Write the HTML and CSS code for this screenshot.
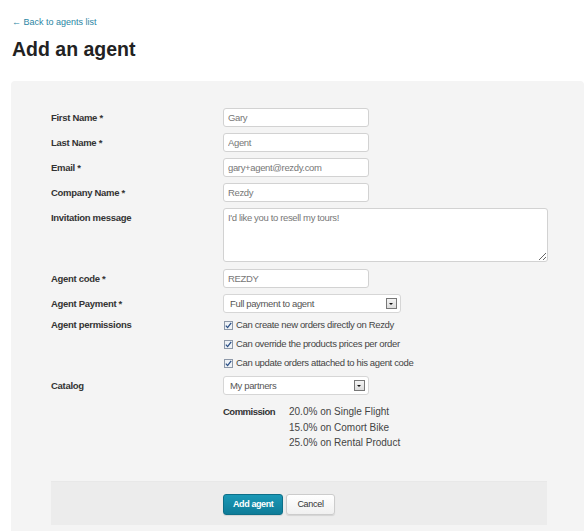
FILE: index.html
```html
<!DOCTYPE html>
<html lang="en">
<head>
    <meta charset="UTF-8">
    <meta name="viewport" content="width=device-width, initial-scale=1.0">
    <title>Add an agent</title>
    <link rel="stylesheet" href="styles.css">
</head>
<body>
    <div class="page">
        <a class="back-link" href="#">&larr; Back to agents list</a>
        <h1>Add an agent</h1>

        <div class="panel">
            <div class="form-row">
                <label>First Name *</label>
                <div class="field"><input class="text-input" type="text" value="Gary"></div>
            </div>
            <div class="form-row">
                <label>Last Name *</label>
                <div class="field"><input class="text-input" type="text" value="Agent"></div>
            </div>
            <div class="form-row">
                <label>Email *</label>
                <div class="field"><input class="text-input" type="text" value="gary+agent@rezdy.com"></div>
            </div>
            <div class="form-row">
                <label>Company Name *</label>
                <div class="field"><input class="text-input" type="text" value="Rezdy"></div>
            </div>
            <div class="form-row form-row-message">
                <label>Invitation message</label>
                <div class="field"><textarea class="text-area">I'd like you to resell my tours!</textarea></div>
            </div>
            <div class="form-row">
                <label>Agent code *</label>
                <div class="field"><input class="text-input" type="text" value="REZDY"></div>
            </div>
            <div class="form-row">
                <label>Agent Payment *</label>
                <div class="field">
                    <div class="select select-wide">
                        <span>Full payment to agent</span>
                        <span class="select-arrow"></span>
                    </div>
                </div>
            </div>
            <div class="form-row form-row-checks">
                <label>Agent permissions</label>
                <div class="field checks">
                    <div class="check">
                        <span class="check-box"><svg width="9" height="9" viewBox="0 0 9 9"><path d="M1.8 4.6 L3.6 6.6 L7.2 1.8" fill="none" stroke="#2b4f86" stroke-width="1.3"/></svg></span>
                        Can create new orders directly on Rezdy
                    </div>
                    <div class="check">
                        <span class="check-box"><svg width="9" height="9" viewBox="0 0 9 9"><path d="M1.8 4.6 L3.6 6.6 L7.2 1.8" fill="none" stroke="#2b4f86" stroke-width="1.3"/></svg></span>
                        Can override the products prices per order
                    </div>
                    <div class="check">
                        <span class="check-box"><svg width="9" height="9" viewBox="0 0 9 9"><path d="M1.8 4.6 L3.6 6.6 L7.2 1.8" fill="none" stroke="#2b4f86" stroke-width="1.3"/></svg></span>
                        Can update orders attached to his agent code
                    </div>
                </div>
            </div>
            <div class="form-row">
                <label>Catalog</label>
                <div class="field">
                    <div class="select">
                        <span>My partners</span>
                        <span class="select-arrow"></span>
                    </div>
                </div>
            </div>
            <div class="form-row">
                <span></span>
                <div class="commission">
                    <strong>Commission</strong>
                    <div class="commission-list">
                        <div>20.0% on Single Flight</div>
                        <div>15.0% on Comort Bike</div>
                        <div>25.0% on Rental Product</div>
                    </div>
                </div>
            </div>

            <div class="form-actions">
                <button class="btn btn-primary">Add agent</button>
                <button class="btn">Cancel</button>
            </div>
        </div>
    </div>
</body>
</html>
```

FILE: styles.css
```css
body {
    margin: 0;
    font-family: "Liberation Sans", Arial, sans-serif;
    color: #333;
    background: #fff;
}
.page {
    padding: 16px 2px 0 11px;
}
.back-link {
    display: block;
    margin-left: 1px;
    font-size: 9px;
    line-height: 13px;
    color: #2a86a4;
    text-decoration: none;
}
h1 {
    margin: 8px 0 0 1px;
    font-size: 19.5px;
    line-height: 24px;
    color: #222;
}
.panel {
    margin-top: 20px;
    background: #f4f4f4;
    border-radius: 4px 4px 0 0;
    padding: 27px 37px 10px 40px;
}
.form-row {
    display: grid;
    grid-template-columns: 172px 1fr;
    margin-bottom: 6px;
}
.form-row label {
    font-size: 9.5px;
    letter-spacing: -0.3px;
    font-weight: bold;
    line-height: 19px;
    color: #333;
}
.form-row-message {
    margin-bottom: 7px;
}
.text-input, .text-area {
    display: block;
    box-sizing: border-box;
    width: 146px;
    height: 19px;
    margin: 0;
    padding: 0 4px;
    border: 1px solid #d2d2d2;
    border-radius: 3px;
    background: #fff;
    font-family: inherit;
    font-size: 9.5px;
    letter-spacing: -0.35px;
    color: #777;
    outline: none;
}
.text-area {
    width: 325px;
    height: 54px;
    padding: 3px 4px;
    resize: vertical;
}
.select {
    box-sizing: border-box;
    display: flex;
    align-items: center;
    justify-content: space-between;
    width: 146px;
    height: 19px;
    padding: 0 3px 0 6px;
    border: 1px solid #d6d6d6;
    border-radius: 3px;
    background: #fff;
    font-size: 9.5px;
    letter-spacing: -0.35px;
    color: #555;
}
.select-wide {
    width: 178px;
}
.select-arrow {
    position: relative;
    box-sizing: border-box;
    width: 11px;
    height: 11px;
    border: 1px solid #777;
    background: linear-gradient(#f4f4f4, #dcdcdc);
}
.select-arrow::after {
    content: "";
    position: absolute;
    left: 2px;
    top: 4px;
    border-left: 2.5px solid transparent;
    border-right: 2.5px solid transparent;
    border-top: 2.5px solid #111;
}
.form-row-checks {
    margin-top: -1px;
    margin-bottom: 6px;
}
.form-row-checks label {
    line-height: 14px;
}
.checks {
    display: flex;
    flex-direction: column;
    gap: 5px;
}
.check {
    display: flex;
    align-items: center;
    gap: 3px;
    font-size: 9.5px;
    letter-spacing: -0.35px;
    line-height: 14px;
    color: #444;
}
.check-box {
    display: inline-flex;
    box-sizing: border-box;
    width: 9px;
    height: 9px;
    margin-left: 1px;
    border: 1px solid #8d98a8;
    background: #eef2f6;
}
.check-box svg {
    margin: -1px;
}
.commission {
    display: grid;
    grid-template-columns: 66px 1fr;
    margin-top: 3px;
    font-size: 10px;
    line-height: 15.5px;
    color: #444;
}
.commission strong {
    font-size: 9.5px;
    letter-spacing: -0.5px;
    color: #333;
}
.form-actions {
    margin-top: 30px;
    padding: 12px 0 10px 172px;
    background: #ececec;
    border-top: 1px solid #e8e8e8;
    display: flex;
    gap: 3px;
}
.btn {
    height: 21px;
    padding: 0 10px;
    border: 1px solid #ccc;
    border-radius: 3px;
    background: linear-gradient(#fff, #f0f0f0);
    box-shadow: 0 1px 1px rgba(0,0,0,0.1);
    font-family: inherit;
    font-size: 9px;
    letter-spacing: -0.3px;
    color: #333;
    cursor: pointer;
}
.btn-primary {
    padding: 0 9px;
    border-color: #0d6f88;
    background: linear-gradient(#1a98b6, #0e7c98);
    color: #fff;
    font-weight: bold;
    letter-spacing: -0.4px;
}
```
